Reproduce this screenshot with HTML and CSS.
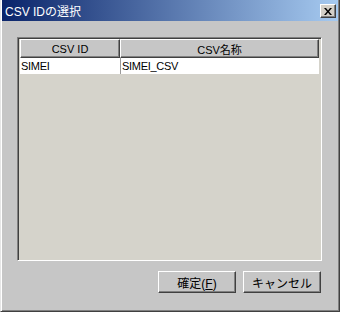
FILE: index.html
```html
<!DOCTYPE html>
<html lang="ja">
<head>
  <meta charset="UTF-8">
  <title>CSV IDの選択</title>
  <link rel="stylesheet" href="styles.css">
</head>
<body>
  <div class="window">
    <div class="titlebar">
      <span class="title">CSV IDの選択</span>
      <button class="close-btn" aria-label="閉じる">
        <svg width="8" height="7" viewBox="0 0 8 7">
          <path d="M0 0h2l2 2.5 2-2.5h2l-3 3.5 3 3.5h-2l-2-2.5-2 2.5h-2l3-3.5z" fill="#000"/>
        </svg>
      </button>
    </div>

    <div class="content">
      <div class="table-panel">
        <div class="table-head">
          <div class="head-cell col-id">CSV ID</div>
          <div class="head-cell col-name">CSV名称</div>
        </div>
        <div class="table-row">
          <div class="cell col-id">SIMEI</div>
          <div class="cell col-name">SIMEI_CSV</div>
        </div>
      </div>

      <div class="actions">
        <button class="btn">確定(<u>F</u>)</button>
        <button class="btn">キャンセル</button>
      </div>
    </div>
  </div>
</body>
</html>
```

FILE: styles.css
```css
/* クラシックなダイアログ風 */
* {
  box-sizing: border-box;
}

body {
  margin: 0;
  font-family: 'Liberation Sans', 'Noto Sans CJK JP', sans-serif;
  font-size: 11px;
  color: #000;
}

.window {
  width: 340px;
  height: 312px;
  background: #c6c6c6;
  border-left: 1px solid #e6e6e6;
  border-right: 1px solid #404040;
  border-bottom: 1px solid #404040;
  box-shadow: inset 1px 0 #fff, inset -1px -1px #808080;
  padding: 0 1px 1px 1px;
  display: flex;
  flex-direction: column;
}

.titlebar {
  height: 21px;
  display: flex;
  align-items: center;
  justify-content: space-between;
  padding: 0 2px 0 3px;
  background: linear-gradient(90deg, #0a246a, #a6caf0);
}

.title {
  color: #fff;
  font-size: 12px;
  white-space: nowrap;
}

.close-btn {
  width: 16px;
  height: 14px;
  padding: 0;
  margin-top: 1px;
  display: flex;
  align-items: center;
  justify-content: center;
  background: #d4d0c8;
  border: 1px solid;
  border-color: #fff #404040 #404040 #fff;
  box-shadow: inset -1px -1px #808080;
}

.content {
  flex: 1;
  padding: 16px 16px 0 15px;
  display: flex;
  flex-direction: column;
}

.table-panel {
  height: 224px;
  background: #d5d3cb;
  border: 1px solid;
  border-color: #808080 #fff #fff #808080;
  box-shadow: inset 1px 1px #404040;
  padding: 1px 1px 0 2px;
}

.table-head {
  display: flex;
  height: 19px;
}

.head-cell {
  display: flex;
  align-items: center;
  justify-content: center;
  background: #c6c6c6;
  border: 1px solid;
  border-color: #fff #404040 #404040 #fff;
  box-shadow: inset -1px -1px #808080;
}

.col-id {
  width: 100px;
}

.col-name {
  width: 199px;
}

.table-row {
  display: flex;
  height: 16px;
  background: #fff;
  width: 299px;
}

.cell {
  display: flex;
  align-items: center;
  padding-left: 1px;
  white-space: nowrap;
  letter-spacing: -0.3px;
}

.cell.col-name {
  border-left: 1px solid #9a9a9a;
}

.actions {
  display: flex;
  justify-content: flex-end;
  gap: 7px;
  margin-top: 10px;
  padding-right: 1px;
}

.btn {
  width: 78px;
  height: 22px;
  padding: 0;
  font-family: 'Liberation Sans', 'Noto Sans CJK JP', sans-serif;
  font-size: 12px;
  color: #000;
  background: #c6c6c6;
  border: 1px solid;
  border-color: #fff #404040 #404040 #fff;
  box-shadow: inset -1px -1px #808080;
}
```
